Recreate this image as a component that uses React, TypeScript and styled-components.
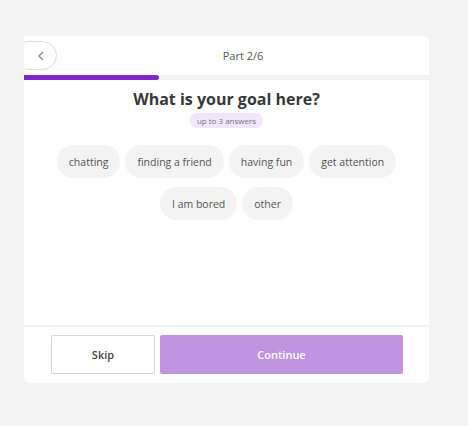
import React, { useState } from "react";
import styled, { createGlobalStyle } from "styled-components";

const GlobalStyle = createGlobalStyle`
  body {
    margin: 0;
    background: #f3f3f3;
    font-family: "Open Sans", "Liberation Sans", sans-serif;
  }
`;

const Page = styled.div`
  width: 468px;
  height: 426px;
  padding: 36px 0 0 24px;
  box-sizing: border-box;
`;

const Card = styled.div`
  width: 405px;
  display: flex;
  flex-direction: column;
  background: #f3f3f3;
  border-radius: 0 6px 6px 6px;
`;

const Header = styled.div`
  height: 39px;
  display: flex;
  align-items: center;
  overflow: hidden;
  background: #fff;
  border-radius: 0 6px 0 0;
`;

const BackButton = styled.button`
  flex: none;
  margin-left: -10px;
  width: 43px;
  height: 29px;
  padding: 0 0 0 10px;
  display: flex;
  align-items: center;
  justify-content: center;
  background: #fff;
  border: 1px solid #dcdcdc;
  border-radius: 15px;
  cursor: pointer;
`;

const PartLabel = styled.span`
  flex: 1;
  text-align: center;
  font-size: 11px;
  color: #555;
`;

const Track = styled.div`
  height: 5px;
  background: #f3f3f3;
`;

const Fill = styled.div`
  height: 100%;
  background: #8127c9;
  border-radius: 0 3px 3px 0;
`;

const Body = styled.div`
  height: 245px;
  background: #fff;
  display: flex;
  flex-direction: column;
  align-items: center;
  padding-top: 9px;
  box-sizing: border-box;
`;

const Title = styled.h1`
  margin: 0;
  font-size: 16px;
  line-height: 20px;
  font-weight: 700;
  color: #383838;
`;

const Badge = styled.span`
  margin-top: 4px;
  padding: 0 7px;
  height: 15px;
  line-height: 15px;
  border-radius: 8px;
  background: #f1e6fb;
  color: #777;
  font-size: 8px;
`;

const Chips = styled.div`
  margin-top: 17px;
  width: 360px;
  display: flex;
  flex-wrap: wrap;
  justify-content: center;
  gap: 9px 5px;
`;

const Chip = styled.button<{ $active: boolean }>`
  height: 33px;
  padding: 0 12px;
  border: none;
  border-radius: 17px;
  background: ${(p) => (p.$active ? "#e7d6f6" : "#f3f3f3")};
  color: #555;
  font-family: inherit;
  font-size: 10.5px;
  cursor: pointer;
`;

const Footer = styled.div`
  margin-top: 2px;
  height: 56px;
  background: #fff;
  border-radius: 0 0 6px 6px;
  display: flex;
  gap: 5px;
  padding: 8px 26px 9px 27px;
  box-sizing: border-box;
`;

const SkipButton = styled.button`
  width: 104px;
  background: #fff;
  border: 1px solid #d6d6d6;
  border-radius: 2px;
  color: #444;
  font-family: inherit;
  font-size: 11px;
  font-weight: 600;
`;

const ContinueButton = styled.button`
  flex: 1;
  background: #c194e2;
  border: none;
  border-radius: 2px;
  color: #fff;
  font-family: inherit;
  font-size: 11px;
  font-weight: 600;
`;

const options = [
  "chatting",
  "finding a friend",
  "having fun",
  "get attention",
  "I am bored",
  "other",
];

export default function App() {
  const [picked, setPicked] = useState<string[]>([]);

  const toggle = (o: string) => {
    setPicked((p) =>
      p.includes(o) ? p.filter((x) => x !== o) : p.length < 3 ? [...p, o] : p
    );
  };

  return (
    <Page>
      <GlobalStyle />
      <Card>
        <Header>
          <BackButton aria-label="back">
            <svg width="8" height="10" viewBox="0 0 8 10" fill="none">
              <path d="M5.5 1.5L2 5l3.5 3.5" stroke="#888" strokeWidth="1.4" strokeLinecap="round" strokeLinejoin="round" />
            </svg>
          </BackButton>
          <PartLabel>Part 2/6</PartLabel>
        </Header>
        <Track>
          <Fill style={{ width: `${(2 / 6) * 100}%` }} />
        </Track>
        <Body>
          <Title>What is your goal here?</Title>
          <Badge>up to 3 answers</Badge>
          <Chips>
            {options.map((o) => (
              <Chip key={o} $active={picked.includes(o)} onClick={() => toggle(o)}>
                {o}
              </Chip>
            ))}
          </Chips>
        </Body>
        <Footer>
          <SkipButton>Skip</SkipButton>
          <ContinueButton>Continue</ContinueButton>
        </Footer>
      </Card>
    </Page>
  );
}
